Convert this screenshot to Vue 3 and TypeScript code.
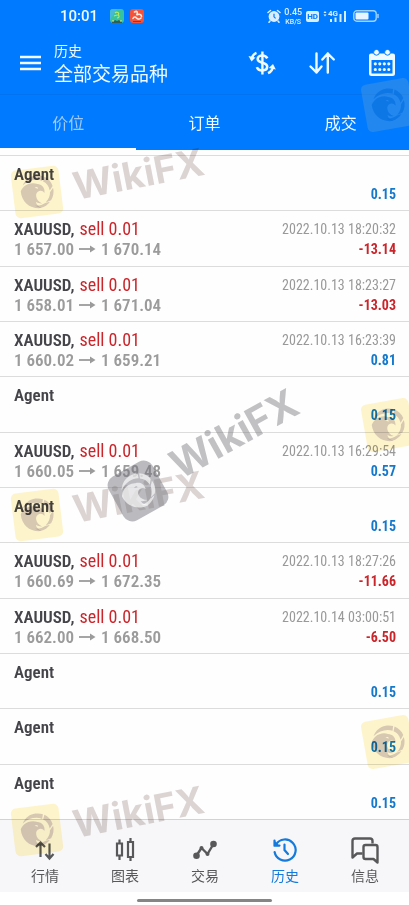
<script setup lang="ts">
import { ref } from 'vue'

interface Deal {
  kind: 'deal'
  symbol: string
  side: string
  open: string
  close: string
  time: string
  profit: string
}
interface Agent {
  kind: 'agent'
  profit: string
}
type Entry = Deal | Agent

const deal = (open: string, close: string, time: string, profit: string): Deal => ({
  kind: 'deal', symbol: 'XAUUSD', side: 'sell 0.01', open, close, time, profit,
})
const agent = (): Agent => ({ kind: 'agent', profit: '0.15' })

const entries: Entry[] = [
  agent(),
  deal('1 657.00', '1 670.14', '2022.10.13 18:20:32', '-13.14'),
  deal('1 658.01', '1 671.04', '2022.10.13 18:23:27', '-13.03'),
  deal('1 660.02', '1 659.21', '2022.10.13 16:23:39', '0.81'),
  agent(),
  deal('1 660.05', '1 659.48', '2022.10.13 16:29:54', '0.57'),
  agent(),
  deal('1 660.69', '1 672.35', '2022.10.13 18:27:26', '-11.66'),
  deal('1 662.00', '1 668.50', '2022.10.14 03:00:51', '-6.50'),
  agent(),
  agent(),
  agent(),
]

const tabs: string[] = ['价位', '订单', '成交']
const activeTab = ref(0)

const navItems: { id: string; label: string }[] = [
  { id: 'quotes', label: '行情' },
  { id: 'charts', label: '图表' },
  { id: 'trade', label: '交易' },
  { id: 'history', label: '历史' },
  { id: 'messages', label: '信息' },
]
const activeNav = ref('history')

const wideMarks: string[] = ['one', 'two', 'three']
</script>

<template>
  <div class="page">
    <svg class="defs" aria-hidden="true">
      <symbol id="eagle" viewBox="0 0 48 48">
        <path d="M9.500 15C13 9 18.500 6 24.500 6c3 0 5.500.6 8 1.800l-1.500 5C25.500 9.500 17 9.800 9.500 15z" />
        <path d="M34 8.500c4 2.500 6.800 6.300 7.700 11L38 24c-.5-5-2.500-8.500-6-10.500z" />
        <path d="M42 21.500c.6 5-.8 9.600-3.800 13.200L32 36.500c4-3.500 5.700-7 6-10.500z" />
        <path d="M36.800 36.300c-2.800 3-6.500 5-11 5.600L20 38.500c5 .8 8.500 0 11.500-1.500z" />
        <path fill-rule="evenodd" d="M6.500 21c1-1.500 2.500-3.500 4.500-4.800 4.500-3 10.500-3.200 14.500-.7 4.500 1.200 7.800 4.500 6.500 10.500-1.300-2.200-3-3.200-5.300-2.800-2.700.5-4.200 2.500-4.200 5.300 0 3.500 2 6.500 5.500 8.500-3-.3-5-1.200-6.500-2.500 0 3 2 5.500 5 7.500C15 42 6 33.500 6.500 21zM22 19l3.500 1.500c.3-1-.3-1.800-1.500-2z" />
      </symbol>
    </svg>

    <header class="header">
      <div class="status">
        <time class="clock">10:01</time>
        <svg class="app-icon" viewBox="0 0 14 14" aria-hidden="true">
          <rect width="14" height="14" rx="3" fill="#35c3a0" />
          <path d="M0 11V3a3 3 0 0 1 3-3h4z" fill="#48b8d8" />
          <path d="M5 4c2-2 5 0 3 2 2 1 1 3-1 3M4 7l3-1" fill="none" stroke="#b9e85c" stroke-width="1.200" />
          <path d="M2 12h2l1-1 2 1 2-1 1 1h2v2H2z" fill="#345d55" />
          <path d="M2 12h2M10 12h2" stroke="#ffe27c" />
        </svg>
        <svg class="app-icon" viewBox="0 0 14 14" aria-hidden="true">
          <rect width="14" height="14" rx="3" fill="#f4523a" />
          <path d="M4.500 3c2.500-1.500 4 .5 2 3 3-1.500 5-.5 5 1.500M3 9.500c1-2 2.500-2 3.500-.5s3 1.500 4.500 0" fill="none" stroke="#ffe9df" stroke-width="1.600" stroke-linecap="round" />
          <path d="M3 12.500h8" stroke="#a92e24" />
        </svg>
        <span class="spacer"></span>
        <svg class="alarm" viewBox="0 0 14 14" aria-hidden="true">
          <path d="M1 3.500 3.500 1.500M13 3.500 10.500 1.500M3 12l-1 1.300M11 12l1 1.300" stroke="#d9efff" stroke-width="1.500" stroke-linecap="round" />
          <circle cx="7" cy="7.500" r="5.400" fill="#d9efff" />
          <path d="M7 4.800v3l1.600 1.600" fill="none" stroke="#007aff" stroke-width="1.200" />
        </svg>
        <span class="speed"><span class="rate">0.45</span><span>KB/S</span></span>
        <span class="hd">HD</span>
        <svg class="signal" viewBox="0 0 24 14" aria-hidden="true">
          <path d="M.5 4 2 2l1.500 2zM.5 5.500 2 7.500l1.500-2z" fill="#d9efff" />
          <text x="5" y="7" font-size="8" font-weight="700" fill="#d9efff">4G</text>
          <path d="M8 10v3M12.500 8.500V13M17.500 5v8M22 2v11" stroke="#d9efff" stroke-width="2" />
        </svg>
        <svg class="battery" viewBox="0 0 26 12" aria-hidden="true">
          <rect x=".8" y=".8" width="22.400" height="10.400" rx="3" fill="none" stroke="#9fd2ff" stroke-width="1.400" />
          <rect x="2.500" y="2.500" width="13" height="7" rx="1" fill="#e6f5ff" />
          <path d="M25 4.500v3" stroke="#9fd2ff" stroke-width="1.500" stroke-linecap="round" />
        </svg>
      </div>

      <div class="bar">
        <button class="icon-button menu" type="button" aria-label="菜单">
          <svg viewBox="0 0 21 16"><path d="M0 2h21M0 8h21M0 14h21" stroke="#eefaff" stroke-width="2.400" /></svg>
        </button>
        <h1 class="titles">
          <span class="small-title">历史</span>
          <span class="main-title">全部交易品种</span>
        </h1>
        <button class="icon-button" type="button" aria-label="货币">
          <svg viewBox="0 0 28 28" fill="none" stroke="#eefaff">
            <path d="M19.300 9.300C18.300 7.300 16.500 6.500 14.300 6.500c-2.700 0-4.600 1.300-4.600 3.500 0 5 9.500 2.500 9.500 7.600 0 2.400-2 3.900-4.900 3.900-2.600 0-4.700-1.100-5.400-3.300" stroke-width="2.600" />
            <path d="M14.400 2.500v23" stroke-width="2.400" />
            <path d="M3.500 10.500C4 7 5.500 5 8.500 3.800" stroke-width="2.400" />
            <path d="M25 17.500c-.4 3.500-2 5.500-5 6.700" stroke-width="2.400" />
            <path d="M.5 7 7.500 8.500 3.500 12.500zM27.800 20.500 20.800 19 25 15z" fill="#eefaff" stroke="none" />
          </svg>
        </button>
        <button class="icon-button" type="button" aria-label="排序">
          <svg viewBox="0 0 28 28" fill="none" stroke="#eefaff" stroke-width="2.400" stroke-linecap="round" stroke-linejoin="round">
            <path d="M8.500 4.500v19M2.500 17.500l6 6 5-6M19.800 23.500v-19M14.300 10.500l5.500-6 6 6" />
          </svg>
        </button>
        <button class="icon-button" type="button" aria-label="日历">
          <svg viewBox="0 0 28 28">
            <path d="M3 4.500h22a2 2 0 0 1 2 2V24.500a2.500 2.500 0 0 1-2.500 2.500h-21A2.500 2.500 0 0 1 1 24.500V6.500a2 2 0 0 1 2-2zm.5 6.500v13.500h21V11z" fill="#eefaff" fill-rule="evenodd" />
            <circle cx="8.500" cy="3.300" r="2.900" fill="#eefaff" stroke="#007aff" />
            <circle cx="19.500" cy="3.300" r="2.900" fill="#eefaff" stroke="#007aff" />
            <path d="M7.300 14.800h14M7.300 20.500h14" stroke="#eefaff" stroke-width="3.200" stroke-linecap="round" stroke-dasharray="0 4.500" />
          </svg>
        </button>
      </div>

      <nav class="tabs">
        <button
          v-for="(tab, i) in tabs"
          :key="tab"
          type="button"
          class="tab"
          :class="{ active: activeTab === i }"
          @click="activeTab = i"
        >{{ tab }}</button>
      </nav>
    </header>

    <ul class="list">
      <li v-for="(entry, i) in entries" :key="i" class="row">
        <div class="line">
          <template v-if="entry.kind === 'deal'">
            <span class="deal"><b class="name">{{ entry.symbol }},</b><span class="side">{{ entry.side }}</span></span>
            <time class="time">{{ entry.time }}</time>
          </template>
          <b v-else class="name">Agent</b>
        </div>
        <div class="line">
          <span v-if="entry.kind === 'deal'" class="prices">
            {{ entry.open }}
            <svg viewBox="0 0 17 10" class="arrow" aria-hidden="true"><path d="M0 5h13" stroke="currentColor" stroke-width="1.800" /><path d="M11 1.500 16.500 5 11 8.500z" fill="currentColor" /></svg>
            {{ entry.close }}
          </span>
          <b class="profit" :class="{ loss: entry.profit.startsWith('-') }">{{ entry.profit }}</b>
        </div>
      </li>
    </ul>

    <nav class="bottom-nav">
      <a
        v-for="item in navItems"
        :key="item.id"
        href="#"
        class="nav-item"
        :class="{ current: activeNav === item.id }"
        @click.prevent="activeNav = item.id"
      >
        <svg viewBox="0 0 30 30" fill="none" stroke="currentColor" aria-hidden="true">
          <g v-if="item.id === 'quotes'" stroke-width="2.200">
            <path d="M10.500 22V8M6 12l4.500-4.500L15 12M19.500 8.500V23M15.500 19l4 4.500 4-4.500" />
          </g>
          <g v-else-if="item.id === 'charts'" stroke-width="2.200">
            <path d="M9.500 4.500V8M9.500 21v4M20.500 3v4M20.500 22.500V26" />
            <path d="M7 8.500h5v12H7zM18 7h5v15h-5z" />
          </g>
          <g v-else-if="item.id === 'trade'" stroke-width="2.400" stroke-linejoin="round">
            <path d="M6.500 20.500 11.500 13l6 6L23.500 9" />
            <g fill="currentColor" stroke="none">
              <circle cx="6.500" cy="20.800" r="3.300" /><circle cx="11.500" cy="13" r="2" />
              <circle cx="17.500" cy="19" r="2" /><circle cx="23.500" cy="9" r="3.300" />
            </g>
          </g>
          <g v-else-if="item.id === 'history'" stroke-width="2.200" stroke-linecap="round">
            <path d="M6 9.500a10.600 10.600 0 1 1-1.400 7.500" />
            <path d="M4.500 5.500v5h5" />
            <path d="M14.500 9.500V15l3.500 4" />
            <path d="M4 5v6.500h6z" fill="currentColor" stroke="none" />
          </g>
          <g v-else stroke-width="2.400" stroke-linejoin="round">
            <path d="M22.500 8.500V6A2.500 2.500 0 0 0 20 3.500H5A2.500 2.500 0 0 0 2.500 6v16.500L7 18.500h5.500" />
            <path d="M15.500 10h10A2 2 0 0 1 27.500 12v15.500l-4-3.500h-8a2 2 0 0 1-2-2V12a2 2 0 0 1 2-2z" />
          </g>
        </svg>
        <span>{{ item.label }}</span>
      </a>
    </nav>
    <div class="home"><span></span></div>

    <div class="marks" aria-hidden="true">
      <svg v-for="mark in wideMarks" :key="mark" class="mark wide" :class="mark" viewBox="0 0 210 100">
        <g transform="translate(37 62) rotate(-7)">
          <rect x="-24" y="-24" width="48" height="48" rx="5" class="tile" />
          <use href="#eagle" x="-22" y="-22" width="44" height="44" class="bird" />
        </g>
        <text transform="translate(76 70) rotate(-11)" font-size="38" class="brand">WikiFX</text>
      </svg>
      <svg v-for="mark in wideMarks" :key="mark" class="mark side-mark" :class="[mark, { 'on-blue': mark === 'one' }]" viewBox="0 0 60 60">
        <g transform="translate(30 30) rotate(-10)">
          <rect x="-24" y="-24" width="48" height="48" rx="5" class="tile" />
          <use href="#eagle" x="-22" y="-22" width="44" height="44" class="bird" />
        </g>
      </svg>
      <svg class="mark center" viewBox="0 0 220 150">
        <g transform="translate(38 106) rotate(-29)">
          <rect x="-25" y="-25" width="50" height="50" rx="10" fill="#77777f" fill-opacity=".5" />
          <use href="#eagle" x="-23" y="-23" width="46" height="46" fill="#fff" fill-opacity=".65" />
        </g>
        <text transform="translate(80 95) rotate(-29)" font-size="40" fill="#77777f" fill-opacity=".45" class="brand-dark">WikiFX</text>
      </svg>
    </div>
  </div>
</template>

<style>
body {
  margin: 0;
  background: #fff;
}
</style>

<style scoped>
.page {
  position: relative;
  display: flex;
  flex-direction: column;
  min-height: 100vh;
  overflow: hidden;
  background: #fefefe;
  color: #444;
  font-family: 'Roboto Condensed', 'Noto Sans CJK SC', sans-serif;
}
.defs {
  position: absolute;
  width: 0;
  height: 0;
}
button {
  padding: 0;
  border: 0;
  background: none;
  color: inherit;
  font: inherit;
  cursor: pointer;
}
svg {
  display: block;
}
.header {
  background: #007aff;
  color: #eefaff;
}
.status {
  display: flex;
  align-items: center;
  height: 32px;
  padding: 0 30px 0 60px;
  font-family: Roboto, sans-serif;
}
.clock {
  margin-right: 12px;
  font-size: 15px;
  font-weight: 500;
}
.app-icon {
  width: 14px;
  height: 14px;
  margin-right: 6px;
}
.spacer {
  flex: 1;
}
.alarm {
  width: 14px;
  height: 14px;
  margin-right: 3px;
}
.speed {
  display: flex;
  flex-direction: column;
  align-items: center;
  margin-right: 4px;
  font-size: 7px;
  font-weight: 500;
  line-height: 8px;
  color: #d9efff;
}
.rate {
  font-size: 9px;
  line-height: 11px;
}
.hd {
  padding: 0 1px;
  border-radius: 2px;
  background: #d9efff;
  color: #007aff;
  font-size: 8px;
  font-weight: 700;
  line-height: 11px;
}
.signal {
  width: 24px;
  height: 14px;
  margin: 0 6px 0 4px;
}
.battery {
  width: 26px;
  height: 12px;
}
.bar {
  display: flex;
  align-items: center;
  gap: 32px;
  padding: 8px 13px 8px 20px;
  box-sizing: border-box;
  height: 62px;
}
.icon-button svg {
  width: 28px;
  height: 28px;
}
.menu {
  margin-right: -19px;
}
.menu svg {
  width: 21px;
  height: 16px;
}
.titles {
  flex: 1;
  margin: 0;
  font-family: 'Noto Sans CJK SC', sans-serif;
  font-weight: 400;
}
.titles span {
  display: block;
  white-space: nowrap;
}
.small-title {
  font-size: 14px;
  line-height: 20px;
}
.main-title {
  font-size: 19px;
  line-height: 26px;
}
.tabs {
  display: grid;
  grid-template-columns: repeat(3, 1fr);
  height: 56px;
  border-top: 1px solid #0072f2;
  box-sizing: border-box;
}
.tab {
  border-bottom: 2px solid transparent;
  font-family: 'Noto Sans CJK SC', sans-serif;
  font-size: 16px;
}
.tab.active {
  border-color: #fff;
  color: #9fcaf8;
}
.list {
  flex: 1;
  display: grid;
  grid-auto-rows: 1fr;
  margin: 0;
  padding: 5px 0 0;
  list-style: none;
}
.row {
  padding: 8px 13px 6px 14px;
  border-top: 1px solid #dcdcdc;
}
.line {
  display: flex;
  align-items: center;
  justify-content: space-between;
  height: 20px;
  font-size: 17px;
  line-height: 20px;
  white-space: nowrap;
}
.deal {
  display: flex;
  align-items: baseline;
  gap: 5px;
}
.name {
  color: #444449;
  font-weight: 600;
}
.side {
  color: #c9252b;
  font-size: 18px;
}
.time {
  color: #999;
  font-size: 14px;
}
.prices {
  display: flex;
  align-items: center;
  gap: 5px;
  color: #9b9b9b;
  font-weight: 600;
}
.arrow {
  width: 17px;
  height: 10px;
}
.profit {
  margin-left: auto;
  color: #1478cc;
  font-size: 14px;
  font-weight: 700;
}
.profit.loss {
  color: #c9252b;
}
.bottom-nav {
  display: grid;
  grid-template-columns: repeat(5, 1fr);
  box-sizing: border-box;
  height: 73px;
  padding: 15px 4px 0 5px;
  border-top: 1px solid #d3d3d5;
  background: #f7f7f9;
}
.nav-item {
  display: flex;
  flex-direction: column;
  align-items: center;
  color: #58585a;
  font-family: 'Noto Sans CJK SC', sans-serif;
  font-size: 14px;
  line-height: 20px;
  text-decoration: none;
}
.nav-item svg {
  width: 30px;
  height: 30px;
}
.nav-item.current {
  color: #147adb;
}
.home {
  display: flex;
  align-items: center;
  justify-content: center;
  height: 13px;
  padding-top: 3px;
  box-sizing: border-box;
  background: #fff;
}
.home span {
  width: 33%;
  height: 3px;
  border-radius: 2px;
  background: #858585;
}
.marks {
  position: absolute;
  inset: 0;
  overflow: hidden;
  pointer-events: none;
}
.mark {
  position: absolute;
  overflow: visible;
}
.wide,
.side-mark:not(.on-blue) {
  mix-blend-mode: multiply;
}
.wide {
  left: 0;
  width: 210px;
  height: 100px;
}
.wide.one {
  top: 130px;
}
.wide.two {
  top: 453px;
}
.wide.three {
  top: 768px;
}
.side-mark {
  right: -9px;
  width: 60px;
  height: 60px;
}
.side-mark.one {
  top: 75px;
}
.side-mark.two {
  top: 395px;
}
.side-mark.three {
  top: 712px;
}
.center {
  top: 385px;
  left: 100px;
  width: 220px;
  height: 150px;
}
.tile {
  fill: #ffe478;
  fill-opacity: 0.38;
}
.bird {
  fill: #8a7480;
  fill-opacity: 0.34;
}
.on-blue .tile {
  fill: #62a0d0;
  fill-opacity: 0.35;
}
.on-blue .bird {
  fill: #006ce0;
  fill-opacity: 0.6;
}
.brand,
.brand-dark {
  font-family: Inter, sans-serif;
  font-weight: 700;
}
.brand {
  fill: #98857d;
  fill-opacity: 0.34;
}
</style>
